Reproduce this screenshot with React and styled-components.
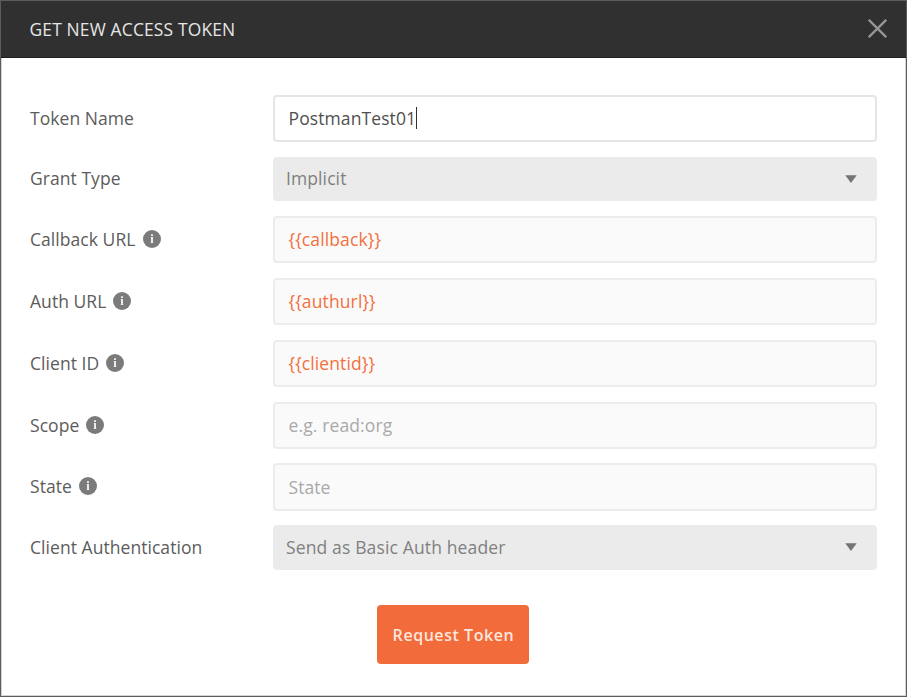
import React from "react";
import styled, { createGlobalStyle } from "styled-components";

const GlobalStyle = createGlobalStyle`
  *, *::before, *::after { box-sizing: border-box; }
  body { margin: 0; background: #fff; font-family: "Open Sans", sans-serif; }
`;

const Dialog = styled.div`
  width: 907px;
  height: 697px;
  border: 1px solid #5c5c5c;
  background: #fff;
  box-shadow: inset 0 0 0 1px #d4d4d4;
  overflow: hidden;
`;

const Header = styled.header`
  display: flex;
  align-items: center;
  justify-content: space-between;
  height: 58px;
  margin: -1px -1px 0;
  padding: 0 19px 2px 28.5px;
  border: 1px solid #161616;
  border-bottom-color: #202020;
  background: #303030;
`;

const Title = styled.h1`
  margin: 0;
  padding-top: 1px;
  font-size: 17.4px;
  font-weight: 400;
  line-height: 24px;
  letter-spacing: 0.17px;
  color: #e6e6e6;
  white-space: nowrap;
`;

const CloseButton = styled.button`
  display: flex;
  padding: 0;
  border: 0;
  background: none;
`;

const Form = styled.form`
  padding: 37px 29px 0;
`;

const Row = styled.div`
  display: grid;
  grid-template-columns: 243px 604px;
  height: ${(p) => p.$height}px;
  margin-bottom: ${(p) => p.$gap}px;
`;

const Label = styled.label`
  display: flex;
  align-items: center;
  padding-bottom: 1px;
  font-size: 17.5px;
  color: #5c5c5c;
  white-space: nowrap;
  svg { margin-left: ${(p) => p.$iconGap}px; }
`;

const Text = styled.span`
  letter-spacing: ${(p) => p.$track}px;
`;

const Field = styled.div`
  display: flex;
  align-items: center;
  padding: 0 13.5px 0.5px;
  border: 2px solid ${(p) => (p.$active ? "#e6e6e6" : "#ececec")};
  border-radius: 4px;
  background: ${(p) => (p.$active ? "#fff" : "#fafafa")};
  font-size: 17.5px;
  color: ${(p) => ({ text: "#505050", variable: "#f3703f", hint: "#a9a9a9" })[p.$tone]};
  white-space: nowrap;
`;

const Caret = styled.span`
  width: 1px;
  height: 22px;
  background: #303030;
`;

const SelectBox = styled.div`
  display: flex;
  align-items: center;
  justify-content: space-between;
  padding: 0 20px 1px 13px;
  border-radius: 4px;
  background: #ebebeb;
  font-size: 17.5px;
  color: #808080;
  white-space: nowrap;
  svg { margin-top: 1px; }
`;

const Actions = styled.div`
  display: flex;
  padding: 35px 0 0 347.4px;
`;

const SubmitButton = styled.button`
  width: 152px;
  height: 59px;
  padding: 2px 0 0;
  border: 0;
  border-radius: 4px;
  background: #f26b3a;
  color: #fde6dd;
  font: 600 16px "Open Sans", sans-serif;
  letter-spacing: 0.55px;
  white-space: nowrap;
`;

const CloseIcon = () => (
  <svg width="19" height="19" viewBox="0 0 19 19" fill="none" stroke="#969696" strokeWidth="2.3">
    <path d="M0.8 0.8L18.2 18.2M18.2 0.8L0.8 18.2" />
  </svg>
);

const InfoIcon = () => (
  <svg width="18" height="18" viewBox="0 0 18 18">
    <circle cx="9" cy="9" r="9" fill="#7b7b7b" />
    <path d="M8 4.3h2v1.8H8zM8 7.1h2v5.8H8z" fill="#ececec" />
    <path d="M7.2 7.1h0.8v1h-0.8zM7.2 12h3.6v0.9H7.2z" fill="#ececec" fillOpacity="0.3" />
  </svg>
);

const ArrowIcon = () => (
  <svg width="12" height="8" viewBox="0 0 12 8">
    <path d="M0.3 0.2H11.7L6 7.9Z" fill="#747474" />
  </svg>
);

const rows = [
  { label: "Token Name", value: "PostmanTest01", track: 0.1, tone: "text", active: true, height: 46.5, gap: 15 },
  { label: "Grant Type", value: "Implicit", track: 0.1, select: true, height: 44.5, gap: 14.5 },
  { label: "Callback URL", info: true, value: "{{callback}}", track: 0.12, tone: "variable", height: 47.5, gap: 14.5 },
  { label: "Auth URL", info: true, value: "{{authurl}}", track: 0.12, tone: "variable", height: 47.5, gap: 14.5 },
  { label: "Client ID", info: true, value: "{{clientid}}", track: 0.1, tone: "variable", height: 47, gap: 15 },
  { label: "Scope", info: true, value: "e.g. read:org", track: 0.12, tone: "hint", height: 47, gap: 14.5 },
  { label: "State", info: true, value: "State", track: 0.04, tone: "hint", height: 47.5, gap: 14 },
  { label: "Client Authentication", value: "Send as Basic Auth header", track: 0.14, select: true, height: 45, gap: 0 },
];

export default function App() {
  return (
    <>
      <GlobalStyle />
      <Dialog>
        <Header>
          <Title>GET NEW ACCESS TOKEN</Title>
          <CloseButton type="button" aria-label="Close"><CloseIcon /></CloseButton>
        </Header>
        <Form>
          {rows.map((r) => (
            <Row key={r.label} $height={r.height} $gap={r.gap}>
              <Label $iconGap={r.label.length < 10 ? 7 : 8}>
                <Text $track={0.05}>{r.label}</Text>
                {r.info && <InfoIcon />}
              </Label>
              {r.select ? (
                <SelectBox>
                  <Text $track={r.track}>{r.value}</Text>
                  <ArrowIcon />
                </SelectBox>
              ) : (
                <Field $active={r.active} $tone={r.tone}>
                  <Text $track={r.track}>{r.value}</Text>
                  {r.active && <Caret />}
                </Field>
              )}
            </Row>
          ))}
          <Actions>
            <SubmitButton type="button">Request Token</SubmitButton>
          </Actions>
        </Form>
      </Dialog>
    </>
  );
}
